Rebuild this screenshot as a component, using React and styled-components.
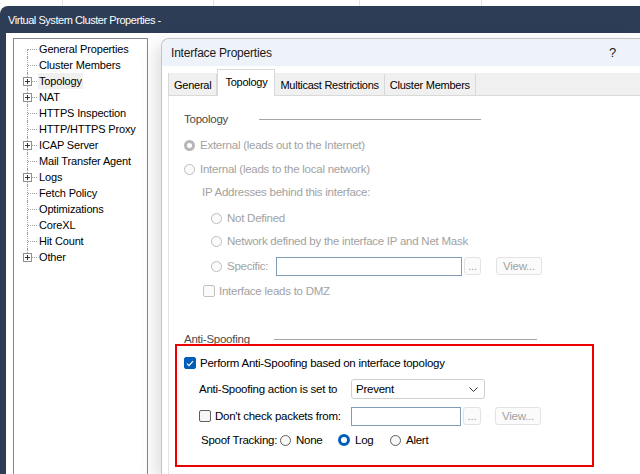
import { createGlobalStyle } from "styled-components";
import styled from "styled-components";

const GlobalStyle = createGlobalStyle`
html, body {
  margin: 0;
  padding: 0;
  background: #ffffff;
  overflow: hidden;
}
body {
  font-family: "Liberation Sans", Arial, sans-serif;
}
`;

export const Page = styled.div`
width: 640px;
height: 474px;
display: flex;
flex-direction: column;
overflow: hidden;
background: #ffffff;
`;

export const TopStrip = styled.div`
height: 6px;
display: flex;
flex-shrink: 0;
`;

export const StripCell = styled.div`
width: ${p => p.w}px;
border-right: 1px solid #e3e3e3;
`;

export const Window = styled.div`
flex: 1;
display: flex;
flex-direction: column;
background: #2c3d55;
border-top-left-radius: 8px;
padding-left: 6px;
min-height: 0;
`;

export const TitleBar = styled.div`
height: 27px;
display: flex;
align-items: center;
padding-left: 2px;
color: #ffffff;
font-size: 11px;
letter-spacing: -0.45px;
flex-shrink: 0;
`;

export const Body = styled.div`
flex: 1;
display: flex;
background: #ffffff;
padding-top: 5px;
min-height: 0;
`;

/* left navigation tree */
export const Tree = styled.div`
width: 133px;
margin-left: 7px;
border: 1px solid #828790;
border-bottom: none;
padding-top: 2px;
background: #ffffff;
`;

export const TreeRow = styled.div`
height: 16px;
display: flex;
align-items: center;
font-size: 11px;
color: #000;
`;

export const Connector = styled.div`
width: 24px;
height: 16px;
position: relative;
flex-shrink: 0;
&::before {
  content: "";
  position: absolute;
  left: 13px;
  top: ${p => (p.first ? "8px" : "0")};
  height: ${p => (p.first || p.last ? "8px" : "16px")};
  border-left: 1px dotted #a0a0a0;
}
&::after {
  content: "";
  position: absolute;
  left: 14px;
  top: 8px;
  width: 9px;
  border-top: 1px dotted #a0a0a0;
}
`;

export const Expander = styled.div`
position: absolute;
left: 9px;
top: 4px;
width: 7px;
height: 7px;
border: 1px solid #919191;
background: #ffffff;
z-index: 1;
&::before {
  content: "";
  position: absolute;
  left: 1px;
  top: 3px;
  width: 5px;
  height: 1px;
  background: #333;
}
&::after {
  content: "";
  position: absolute;
  left: 3px;
  top: 1px;
  width: 1px;
  height: 5px;
  background: #333;
}
`;

export const TreeLabel = styled.span`
padding: 0 1px;
line-height: 16px;
background: ${p => (p.active ? "#f0f0f0" : "transparent")};
letter-spacing: -0.15px;
`;

/* inner dialog */
export const Dialog = styled.div`
flex: 1;
margin-left: 13px;
border: 1px solid #c4c4c4;
border-right: none;
border-bottom: none;
border-top-left-radius: 8px;
box-shadow: -6px 6px 16px rgba(0, 0, 0, 0.12);
display: flex;
flex-direction: column;
background: #ffffff;
overflow: hidden;
`;

export const DialogHeader = styled.div`
height: 27px;
background: #eef2f9;
display: flex;
align-items: center;
justify-content: space-between;
padding: 0 24px 0 9px;
font-size: 12px;
letter-spacing: -0.2px;
color: #1a1a1a;
flex-shrink: 0;
`;

export const Help = styled.span`
font-size: 13px;
`;

export const TabBar = styled.div`
margin-top: 7px;
margin-left: 6px;
height: 22px;
display: flex;
align-items: flex-end;
background: #f0f0f0;
border-bottom: 1px solid #d9d9d9;
border-left: 1px solid #d9d9d9;
flex-shrink: 0;
`;

export const Tab = styled.div`
height: ${p => (p.active ? "23px" : "21px")};
margin-bottom: ${p => (p.active ? "-1px" : "0")};
padding: 0 ${p => (p.active ? "7px" : "5px")};
display: flex;
align-items: center;
font-size: 11px;
color: #000;
background: ${p => (p.active ? "#ffffff" : "transparent")};
border-right: 1px solid #d9d9d9;
border-left: ${p => (p.active ? "1px solid #d9d9d9" : "none")};
border-top: ${p => (p.active ? "1px solid #d9d9d9" : "none")};
padding-bottom: ${p => (p.active ? "3px" : "0")};
letter-spacing: -0.25px;
`;

export const TabPage = styled.div`
flex: 1;
margin-left: 6px;
border-left: 1px solid #e4e4e4;
padding: 12px 0 0 15px;
display: flex;
flex-direction: column;
`;

export const Row = styled.div`
height: ${p => p.h || 22}px;
margin-top: ${p => p.mt || 0}px;
margin-left: ${p => p.indent || 0}px;
display: flex;
align-items: center;
font-size: 11.5px;
color: ${p => (p.disabled ? "#a2a2a2" : "#000")};
letter-spacing: -0.25px;
white-space: nowrap;
`;

export const GroupTitle = styled.span`
color: #4a4a4a;
width: ${p => p.w}px;
flex-shrink: 0;
`;

export const GroupLine = styled.div`
width: ${p => p.w}px;
border-top: 1px solid #a6a6a6;
`;

export const Radio = styled.span`
width: ${p => (p.checked && !p.disabled ? 12 : 11)}px;
height: ${p => (p.checked && !p.disabled ? 12 : 11)}px;
border-radius: 50%;
flex-shrink: 0;
margin-right: 5px;
box-sizing: border-box;
border: ${p =>
  p.checked ? `3px solid ${p.disabled ? "#b7b7b7" : "#005fb8"}` : `1px solid ${p.disabled ? "#bdbdbd" : "#5f5f5f"}`};
background: ${p => (p.checked ? "#ffffff" : p.disabled ? "#fbfbfb" : "#f7f7f7")};
`;

export const Check = styled.span`
width: 12px;
height: 12px;
border-radius: 2px;
flex-shrink: 0;
box-sizing: border-box;
margin-right: 4px;
display: flex;
align-items: center;
justify-content: center;
border: 1px solid ${p => (p.checked ? "#005fb8" : p.disabled ? "#c2c2c2" : "#5f5f5f")};
background: ${p => (p.checked ? "#005fb8" : p.disabled ? "#fbfbfb" : "#f7f7f7")};
`;

export const Field = styled.div`
width: ${p => p.w}px;
height: 19px;
box-sizing: border-box;
border: 1px solid #7f9db9;
background: #ffffff;
flex-shrink: 0;
`;

export const SmallButton = styled.div`
height: 18px;
box-sizing: border-box;
border: 1px solid #e3e3e3;
border-radius: 3px;
background: #fbfbfb;
color: #a2a2a2;
display: flex;
align-items: center;
justify-content: center;
width: ${p => p.w}px;
margin-left: ${p => p.ml || 0}px;
font-size: 11.5px;
flex-shrink: 0;
`;

export const Highlight = styled.div`
margin-left: -9px;
width: 408px;
border: 2px solid #ee0000;
padding: 6px 0 14px 7px;
display: flex;
flex-direction: column;
`;

export const Select = styled.div`
width: 134px;
height: 20px;
box-sizing: border-box;
border: 1px solid #cfcfcf;
border-radius: 3px;
background: #ffffff;
display: flex;
align-items: center;
justify-content: space-between;
padding: 0 6px 0 4px;
color: #000;
`;

export const Label = styled.span`
width: ${p => (p.w ? `${p.w}px` : "auto")};
flex-shrink: 0;
`;

const CheckMark = () => (
  <svg width="8" height="7" viewBox="0 0 8 7">
    <path d="M1 3.6 L3 5.6 L7 1.2" fill="none" stroke="#ffffff" strokeWidth="1.2" />
  </svg>
);

const Chevron = () => (
  <svg width="9" height="5" viewBox="0 0 9 5">
    <path d="M0.5 0.5 L4.5 4.5 L8.5 0.5" fill="none" stroke="#333" strokeWidth="1" />
  </svg>
);

const treeItems = [
  { name: "General Properties" },
  { name: "Cluster Members" },
  { name: "Topology", expand: true, active: true },
  { name: "NAT", expand: true },
  { name: "HTTPS Inspection" },
  { name: "HTTP/HTTPS Proxy" },
  { name: "ICAP Server", expand: true },
  { name: "Mail Transfer Agent" },
  { name: "Logs", expand: true },
  { name: "Fetch Policy" },
  { name: "Optimizations" },
  { name: "CoreXL" },
  { name: "Hit Count" },
  { name: "Other", expand: true },
];

const tabs = ["General", "Topology", "Multicast Restrictions", "Cluster Members"];

export default function App() {
  return (
    <Page>
      <GlobalStyle />
      <TopStrip>
        <StripCell w={62} />
        <StripCell w={150} />
        <StripCell w={145} />
        <StripCell w={121} />
      </TopStrip>
      <Window>
        <TitleBar>Virtual System Cluster Properties -</TitleBar>
        <Body>
          <Tree>
            {treeItems.map((item, i) => (
              <TreeRow key={item.name}>
                <Connector first={i === 0} last={i === treeItems.length - 1}>
                  {item.expand && <Expander />}
                </Connector>
                <TreeLabel active={item.active}>{item.name}</TreeLabel>
              </TreeRow>
            ))}
          </Tree>
          <Dialog>
            <DialogHeader>
              <span>Interface Properties</span>
              <Help>?</Help>
            </DialogHeader>
            <TabBar>
              {tabs.map(t => (
                <Tab key={t} active={t === "Topology"}>{t}</Tab>
              ))}
            </TabBar>
            <TabPage>
              <Row>
                <GroupTitle w={75}>Topology</GroupTitle>
                <GroupLine w={222} />
              </Row>
              <Row mt={4} disabled>
                <Radio checked disabled />
                External (leads out to the Internet)
              </Row>
              <Row mt={2} disabled>
                <Radio disabled />
                Internal (leads to the local network)
              </Row>
              <Row mt={1} indent={18} disabled>
                IP Addresses behind this interface:
              </Row>
              <Row mt={4} indent={27} disabled>
                <Radio disabled />
                Not Defined
              </Row>
              <Row mt={1} indent={27} disabled>
                <Radio disabled />
                Network defined by the interface IP and Net Mask
              </Row>
              <Row mt={3} indent={27} disabled>
                <Radio disabled />
                <Label w={49}>Specific:</Label>
                <Field w={186} />
                <SmallButton w={17} ml={2}>...</SmallButton>
                <SmallButton w={46} ml={15}>View...</SmallButton>
              </Row>
              <Row mt={3} indent={19} disabled>
                <Check disabled />
                Interface leads to DMZ
              </Row>
              <Row h={10} mt={32}>
                <GroupTitle w={90}>Anti-Spoofing</GroupTitle>
                <GroupLine w={263} />
              </Row>
              <Highlight>
                <Row>
                  <Check checked>
                    <CheckMark />
                  </Check>
                  Perform Anti-Spoofing based on interface topology
                </Row>
                <Row mt={4} indent={15}>
                  <Label w={152}>Anti-Spoofing action is set to</Label>
                  <Select>
                    <span>Prevent</span>
                    <Chevron />
                  </Select>
                </Row>
                <Row mt={5} indent={15}>
                  <Check />
                  <Label w={136}>Don't check packets from:</Label>
                  <Field w={110} />
                  <SmallButton w={18} ml={2}>...</SmallButton>
                  <SmallButton w={46} ml={14}>View...</SmallButton>
                </Row>
                <Row mt={2} indent={17}>
                  <Label w={79}>Spoof Tracking:</Label>
                  <Radio />
                  <Label w={42}>None</Label>
                  <Radio checked />
                  <Label w={35}>Log</Label>
                  <Radio />
                  <Label>Alert</Label>
                </Row>
              </Highlight>
            </TabPage>
          </Dialog>
        </Body>
      </Window>
    </Page>
  );
}
